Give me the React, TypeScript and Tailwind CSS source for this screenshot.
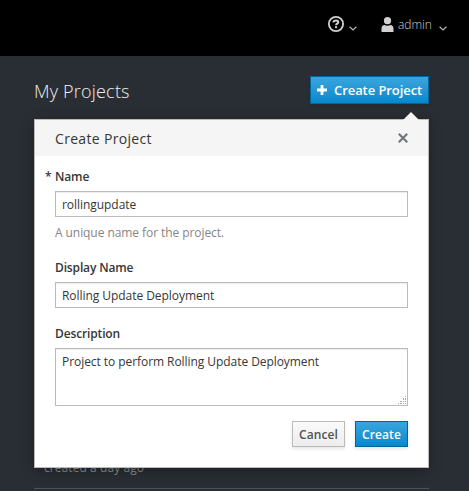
import React from "react";

function Field({ label, required, children }: { label: string; required?: boolean; children: React.ReactNode }) {
  return (
    <div>
      <label className="relative block h-5 text-[12px] leading-[22px] font-semibold tracking-[-0.14px] text-[#363636]">
        {required && <span className="absolute -left-[10px] top-0">*</span>}
        {label}
      </label>
      {children}
    </div>
  );
}

function Chevron() {
  return (
    <svg width="8" height="5" viewBox="0 0 8 5" fill="none" stroke="#b8b8b8" strokeWidth="1.2">
      <path d="M0.6 0.7 4 3.9 7.4 0.7" />
    </svg>
  );
}

function Grip() {
  return (
    <svg className="absolute right-0 bottom-0" width="10" height="10" viewBox="0 0 10 10" fill="#aaaaaa">
      <path d="M8 1h1v1H8zM6 3h1v2H6zM8 3h1v2H8zM3 6h2v1H3zM6 6h1v1H6zM8 6h1v1H8zM1 8h1v1H1zM3 8h2v1H3zM6 8h1v1H6zM8 8h1v1H8z" />
    </svg>
  );
}

const inputClass =
  "block h-[26px] w-full border border-[#bbbbbb] bg-white px-[6px] text-[12px] tracking-[-0.05px] text-[#363636] shadow-[inset_0_1px_1px_rgba(3,3,3,0.075)] outline-none";

export default function App() {
  return (
    <div className="relative h-[491px] w-[469px] overflow-hidden bg-[#292e34] font-['Open_Sans',sans-serif]">
      <header className="flex h-14 items-start bg-black pl-[328px]">
        <svg className="mt-4 shrink-0" width="16" height="16" viewBox="0 0 16 16" fill="none">
          <circle cx="8" cy="8" r="7.1" stroke="#d1d1d1" strokeWidth="1.8" />
          <path d="M5.3 6.4C5.6 5 6.7 4.6 8 4.6c1.4 0 2.3.6 2.3 1.6 0 1.5-2.2 1.4-2.2 3" stroke="#d1d1d1" strokeWidth="2" />
          <path d="M7 10.2h2.1v2H7z" fill="#d1d1d1" />
        </svg>
        <span className="mt-[26px] ml-[5px] flex shrink-0">
          <Chevron />
        </span>
        <svg className="mt-[17px] ml-[24px] shrink-0" width="13" height="15" viewBox="0 0 13 15" fill="#d1d1d1">
          <circle cx="6.5" cy="3.7" r="3.6" />
          <path d="M.5 15v-3.2c0-2.5 1.3-3.4 3-3.7 1.8.8 4.2.8 6 0 1.7.3 3 1.2 3 3.7V15z" />
        </svg>
        <span className="mt-[15px] ml-1 w-[41px] text-[12px] leading-5 font-light text-[#d1d1d1]">admin</span>
        <span className="mt-[26px] flex shrink-0">
          <Chevron />
        </span>
      </header>

      <main className="pr-10 pl-[34px]">
        <div className="flex h-[63px] items-start justify-between pt-5">
          <h1 className="mt-0.5 text-[18px] leading-[27px] font-light tracking-[0.2px] text-[#f0f0f0]">My Projects</h1>
          <button className="flex h-7 w-[119px] items-center border border-[#00659c] bg-gradient-to-b from-[#39a5dc] to-[#0088ce] pl-[6px] text-[13px] leading-none font-semibold tracking-[-0.07px] whitespace-nowrap text-white shadow-[0_2px_3px_rgba(3,3,3,0.1)]">
            <svg className="mr-[7px] shrink-0" width="10" height="10" viewBox="0 0 10 10" fill="white">
              <path d="M3.6 0h2.8v3.6H10v2.8H6.4V10H3.6V6.4H0V3.6h3.6z" />
            </svg>
            Create Project
          </button>
        </div>
        <div className="h-[370px] border-b border-[#4d5258] pt-[339px] pl-[10px]">
          <p className="text-[12px] leading-5 tracking-[0.07px] text-[#8b8d8f]">created a day ago</p>
        </div>
      </main>

      <section
        role="dialog"
        className="absolute top-[119px] left-[34px] h-[349px] w-[395px] border border-[#bbbbbb] bg-white shadow-[0_3px_12px_rgba(3,3,3,0.3)]"
      >
        <svg className="absolute -top-[8px] right-[9px]" width="16" height="8" viewBox="0 0 16 8" fill="#f5f5f5">
          <path d="M0 8 8 0l8 8z" />
        </svg>
        <div className="flex h-9 items-center justify-between bg-[#f5f5f5] pr-5 pl-5">
          <h2 className="pt-0.5 text-[14px] leading-5 tracking-[0.32px] text-[#363636]">Create Project</h2>
          <svg width="10" height="10" viewBox="0 0 10 10" stroke="#72767b" strokeWidth="2.2">
            <path d="M.8.8l8.4 8.4M9.2.8.8 9.2" />
          </svg>
        </div>
        <form className="px-5 pt-[10px]">
          <Field label="Name" required>
            <div className="mt-[5px]">
              <input className={inputClass} defaultValue="rollingupdate" />
            </div>
            <p className="mt-[5px] text-[12px] leading-[22px] tracking-[-0.07px] text-[#858585]">A unique name for the project.</p>
          </Field>
          <div className="mt-[13px]">
            <Field label="Display Name">
              <div className="mt-[5px]">
                <input className={inputClass} defaultValue="Rolling Update Deployment" />
              </div>
            </Field>
          </div>
          <div className="mt-[15px]">
            <Field label="Description">
              <div className="relative mt-[5px] h-[58px] border border-[#bbbbbb] px-[6px] pt-[3px] text-[12px] leading-5 tracking-[-0.06px] text-[#363636] shadow-[inset_0_1px_1px_rgba(3,3,3,0.075)]">
                Project to perform Rolling Update Deployment
                <Grip />
              </div>
            </Field>
          </div>
          <div className="mt-[15px] flex justify-end gap-[10px]">
            <button
              type="button"
              className="h-[26px] w-[53px] border border-[#bbbbbb] bg-gradient-to-b from-[#fafafa] to-[#ededed] pt-0.5 text-[12px] leading-none font-semibold tracking-[0.1px] text-[#4d5258] shadow-[0_2px_3px_rgba(3,3,3,0.1)]"
            >
              Cancel
            </button>
            <button
              type="button"
              className="h-[26px] w-[53px] border border-[#00659c] bg-gradient-to-b from-[#39a5dc] to-[#0088ce] pt-0.5 text-[12px] leading-none font-semibold tracking-[0.1px] text-white shadow-[0_2px_3px_rgba(3,3,3,0.1)]"
            >
              Create
            </button>
          </div>
        </form>
      </section>
    </div>
  );
}
